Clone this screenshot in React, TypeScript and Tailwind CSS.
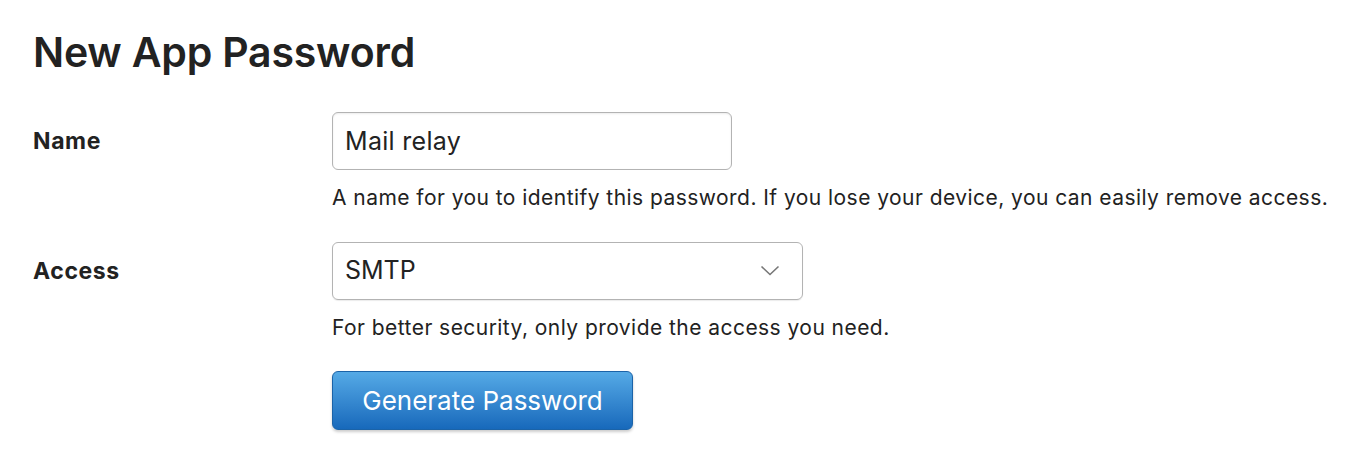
import React from 'react';

const font = { fontFamily: 'Inter, "Noto Sans", sans-serif' };

const Chevron = () => (
  <svg width="20" height="12" viewBox="0 0 20 12" fill="none" className="text-[#777]">
    <path d="M1.5 1.5 L10 9.5 L18.5 1.5" stroke="currentColor" strokeWidth="1.6" />
  </svg>
);

export default function App() {
  return (
    <div className="min-h-screen bg-white pl-[33px] pt-[26px] text-[#222]" style={font}>
      <h1 className="text-[41px] font-semibold leading-[52px] tracking-[-0.2px]">New App Password</h1>

      <div className="mt-[34px] grid grid-cols-[299px_1fr]">
        <label className="pt-[14px] text-[23px] font-bold leading-[30px] tracking-[0.6px]">Name</label>
        <div>
          <input
            defaultValue="Mail relay"
            className="h-[58px] w-[400px] rounded-[6px] border border-[#b3b3b3] px-[12px] text-[25px] tracking-[0.3px] text-[#222] shadow-[inset_0_1px_2px_rgba(0,0,0,0.08)] outline-none"
            style={font}
          />
          <p className="mt-[15px] text-[21px] leading-[26px] tracking-[0.45px]">
            A name for you to identify this password. If you lose your device, you can easily remove access.
          </p>
        </div>

        <label className="mt-[31px] pt-[14px] text-[23px] font-bold leading-[30px] tracking-[0.6px]">Access</label>
        <div className="mt-[31px]">
          <div className="flex h-[58px] w-[471px] items-center justify-between rounded-[6px] border border-[#b3b3b3] pl-[12px] pr-[22px] text-[25px] shadow-[0_1px_1px_rgba(0,0,0,0.08)]">
            <span>SMTP</span>
            <Chevron />
          </div>
          <p className="mt-[15px] text-[21px] leading-[26px] tracking-[0.45px]">For better security, only provide the access you need.</p>
          <button
            className="mt-[30px] h-[59px] w-[301px] rounded-[6px] border border-[#1b63a8] bg-gradient-to-b from-[#55aae6] to-[#1769bb] text-[26px] text-white shadow-[0_2px_3px_rgba(0,0,0,0.2)]"
            style={font}
          >
            Generate Password
          </button>
        </div>
      </div>
    </div>
  );
}
